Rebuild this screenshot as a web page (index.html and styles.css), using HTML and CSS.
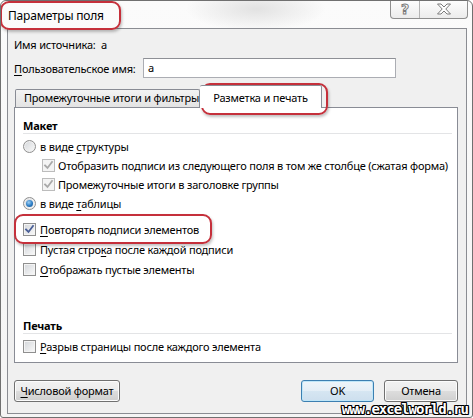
FILE: index.html
```html
<!DOCTYPE html>
<html lang="ru">
<head>
<meta charset="utf-8">
<title>Параметры поля</title>
<link rel="stylesheet" href="styles.css">
</head>
<body>
<div class="window">
  <div class="titlebar">
    <span class="title">Параметры поля</span>
    <div class="caption">
      <span class="cbtn help">?</span>
      <span class="cbtn close">
        <svg width="16" height="12" viewBox="0 0 16 12"><path d="M1.5 1h3.5l3 3 3-3h3.5l-4.7 5 4.7 5h-3.5l-3-3-3 3h-3.5l4.7-5z" fill="#fff" stroke="#7b7b7b" stroke-width="1" stroke-linejoin="round"/></svg>
      </span>
    </div>
  </div>
  <div class="client">
    <div class="row-src"><span class="lbl-src">Имя источника:</span><span>a</span></div>
    <div class="row-name"><span class="lbl-name"><u>П</u>ользовательское имя:</span><div class="input">a</div></div>
    <div class="tabs">
      <div class="tab">Промежуточные итоги и фильтры</div>
      <div class="tab active">Разметка и печать</div>
    </div>
    <div class="panel">
      <div class="gtitle">Макет</div>
      <div class="opt first"><span class="radio"></span><span>в виде <u>с</u>труктуры</span></div>
      <div class="opt sub"><span class="check disabled"><svg viewBox="0 0 11 11"><path d="M2 5.5l2.5 2.5 4.5-6"/></svg></span><span>Отобразить подписи из следующего поля в том же столбце (сжатая форма)</span></div>
      <div class="opt sub"><span class="check disabled"><svg viewBox="0 0 11 11"><path d="M2 5.5l2.5 2.5 4.5-6"/></svg></span><span>Промежуточные итоги в заголовке группы</span></div>
      <div class="opt"><span class="radio on"></span><span>в виде <u>т</u>аблицы</span></div>
      <div class="opt tall gap"><span class="check on"><svg viewBox="0 0 11 11"><path d="M2 5.5l2.5 2.5 4.5-6"/></svg></span><span><u>П</u>овторять подписи элементов</span></div>
      <div class="opt tall"><span class="check"></span><span>Пустая стро<u>к</u>а после каждой подписи</span></div>
      <div class="opt tall"><span class="check"></span><span><u>О</u>тображать пустые элементы</span></div>
      <div class="gtitle print">Печать</div>
      <div class="opt first"><span class="check"></span><span><u>Р</u>азрыв страницы после каждого элемента</span></div>
    </div>
    <div class="buttons">
      <div class="btn numfmt"><u>Ч</u>исловой формат</div>
      <div class="btn ok">OK</div>
      <div class="btn cancel">Отмена</div>
    </div>
  </div>
  <div class="mark mark-title"></div>
  <div class="mark mark-tab"></div>
  <div class="mark mark-check"></div>
  <div class="watermark">www.excelworld.ru</div>
</div>
</body>
</html>
```

FILE: styles.css
```css
* { box-sizing: border-box; }

body {
  margin: 0;
  background: #fff;
  font-family: "Noto Sans", "Open Sans", sans-serif;
  font-size: 11px;
  letter-spacing: -0.2px;
  color: #000;
}

u { text-decoration: underline; text-underline-offset: 2px; }

.window {
  position: relative;
  width: 473px;
  height: 418px;
  border: 1px solid #707070;
  border-radius: 6px 6px 3px 3px;
  background:
    radial-gradient(ellipse 70px 22px at 255px 8px, #e2e2e2, rgba(246,246,246,0)),
    linear-gradient(#fbfbfb, #f4f4f4);
  display: flex;
  flex-direction: column;
  overflow: hidden;
  white-space: nowrap;
}

.titlebar {
  height: 27px;
  flex: none;
  display: flex;
  justify-content: space-between;
  align-items: flex-start;
  padding: 0 4px 0 7px;
}

.title {
  margin-top: 7px;
  line-height: 16px;
  font-size: 12px;
}

.caption {
  display: flex;
  width: 78px;
  height: 19px;
  margin-top: -1px;
  border: 1px solid #8e8e8e;
  border-top: none;
  border-radius: 0 0 4px 4px;
  background: linear-gradient(#fefefe, #ececec);
  overflow: hidden;
}

.cbtn {
  display: flex;
  align-items: center;
  justify-content: center;
}

.help {
  width: 29px;
  border-right: 1px solid #b4b4b4;
  font-family: "DejaVu Sans", sans-serif;
  font-weight: bold;
  font-size: 14px;
  color: #fff;
  -webkit-text-stroke: 1px #7b7b7b;
  line-height: 18px;
}

.close { flex: 1; }

.client {
  flex: 1;
  margin: 0 5px 3px 6px;
  border: 1px solid #8a8c92;
  background: #f0f0f0;
  padding: 8px 8px 0 6px;
  display: flex;
  flex-direction: column;
}

.row-src {
  display: flex;
  line-height: 15px;
}

.lbl-src { flex: none; width: 87px; }

.row-name {
  display: flex;
  align-items: center;
  margin-top: 6px;
}

.lbl-name { flex: none; width: 129px; }

.input {
  width: 253px;
  height: 20px;
  border: 1px solid #abadb3;
  border-top-color: #8e9096;
  background: #fff;
  padding: 0 4px;
  line-height: 18px;
}

.tabs {
  position: relative;
  z-index: 1;
  display: flex;
  align-items: flex-end;
  height: 22px;
  margin-top: 7px;
  padding-left: 1px;
}

.tab {
  width: 185px;
  height: 18px;
  padding-left: 8px;
  border: 1px solid #898c95;
  border-bottom: none;
  border-radius: 2px 2px 0 0;
  background: linear-gradient(#f3f3f3, #e3e3e3);
  line-height: 16px;
}

.tab.active {
  width: 122px;
  height: 23px;
  margin-bottom: -1px;
  padding: 4px 0 0;
  text-align: center;
  background: #fff;
  border-left: none;
}

.panel {
  height: 256px;
  flex: none;
  border: 1px solid #898c95;
  background: #fff;
  padding: 0 5px 0 8px;
}

.gtitle {
  height: 16px;
  margin-top: 10px;
  line-height: 15px;
  font-weight: bold;
  border-bottom: 1px solid #e3e4e6;
}

.gtitle.print { margin-top: 39px; }

.opt {
  display: flex;
  align-items: center;
  gap: 4px;
  height: 19px;
}

.opt.first { margin-top: 3px; }
.opt.tall { height: 20px; }
.opt.gap { margin-top: 6px; }
.opt.sub { padding-left: 19px; gap: 3px; }

.check, .radio {
  flex: none;
  width: 13px;
  height: 13px;
  border: 1px solid #8f8f8f;
  background: linear-gradient(135deg, #d3d6da, #fafafa);
  box-shadow: inset 0 0 0 1px #f4f4f4;
  display: flex;
  align-items: center;
  justify-content: center;
}

.radio {
  border-radius: 50%;
  box-shadow: inset 0 0 0 1px #f0f0f0;
}

.radio.on::after {
  content: "";
  width: 7px;
  height: 7px;
  border-radius: 50%;
  background: radial-gradient(circle at 40% 35%, #9fd0f5, #2a7bc3 55%, #1a4f85);
}

.check svg {
  width: 11px;
  height: 11px;
  fill: none;
  stroke-width: 1.8;
  stroke-linecap: square;
}

.check.on svg { stroke: #4a5f97; }

.check.disabled {
  border-color: #bcbcbc;
  background: #f4f4f4;
}

.check.disabled svg { stroke: #a9a9a9; }

.buttons {
  display: flex;
  margin-top: 17px;
}

.btn {
  height: 22px;
  border: 1px solid #707070;
  border-radius: 3px;
  background: linear-gradient(#f2f2f2 0%, #ebebeb 50%, #dddddd 50%, #cfcfcf 100%);
  box-shadow: inset 0 0 0 1px #fcfcfc;
  display: flex;
  align-items: center;
  justify-content: center;
  line-height: 16px;
}

.numfmt { width: 106px; }
.ok {
  width: 73px;
  margin-left: auto;
  border-color: #3c7fb1;
  background: linear-gradient(#eef5fa 0%, #e4eef6 50%, #d6e6f2 50%, #cddfee 100%);
  box-shadow: inset 0 0 0 1px #bfe6f8;
}
.cancel { width: 74px; margin-left: 10px; }

.mark {
  position: absolute;
  border: 2px solid #c5303b;
  border-radius: 9px;
  box-shadow: 1px 2px 3px rgba(0,0,0,0.25);
}

.mark-title { left: -1px; top: 0; width: 121px; height: 29px; }
.mark-tab { left: 200px; top: 82px; width: 127px; height: 32px; }
.mark-check { left: 13px; top: 213px; width: 198px; height: 30px; }

.watermark {
  position: absolute;
  right: 4px;
  bottom: 1px;
  font-family: "DejaVu Sans Mono", monospace;
  font-weight: bold;
  font-size: 14px;
  line-height: 14px;
  letter-spacing: -1px;
  color: #fff;
  text-shadow:
    1px 0 #000, -1px 0 #000, 0 1px #000, 0 -1px #000,
    1px 1px #000, -1px -1px #000, 1px -1px #000, -1px 1px #000;
}
```
